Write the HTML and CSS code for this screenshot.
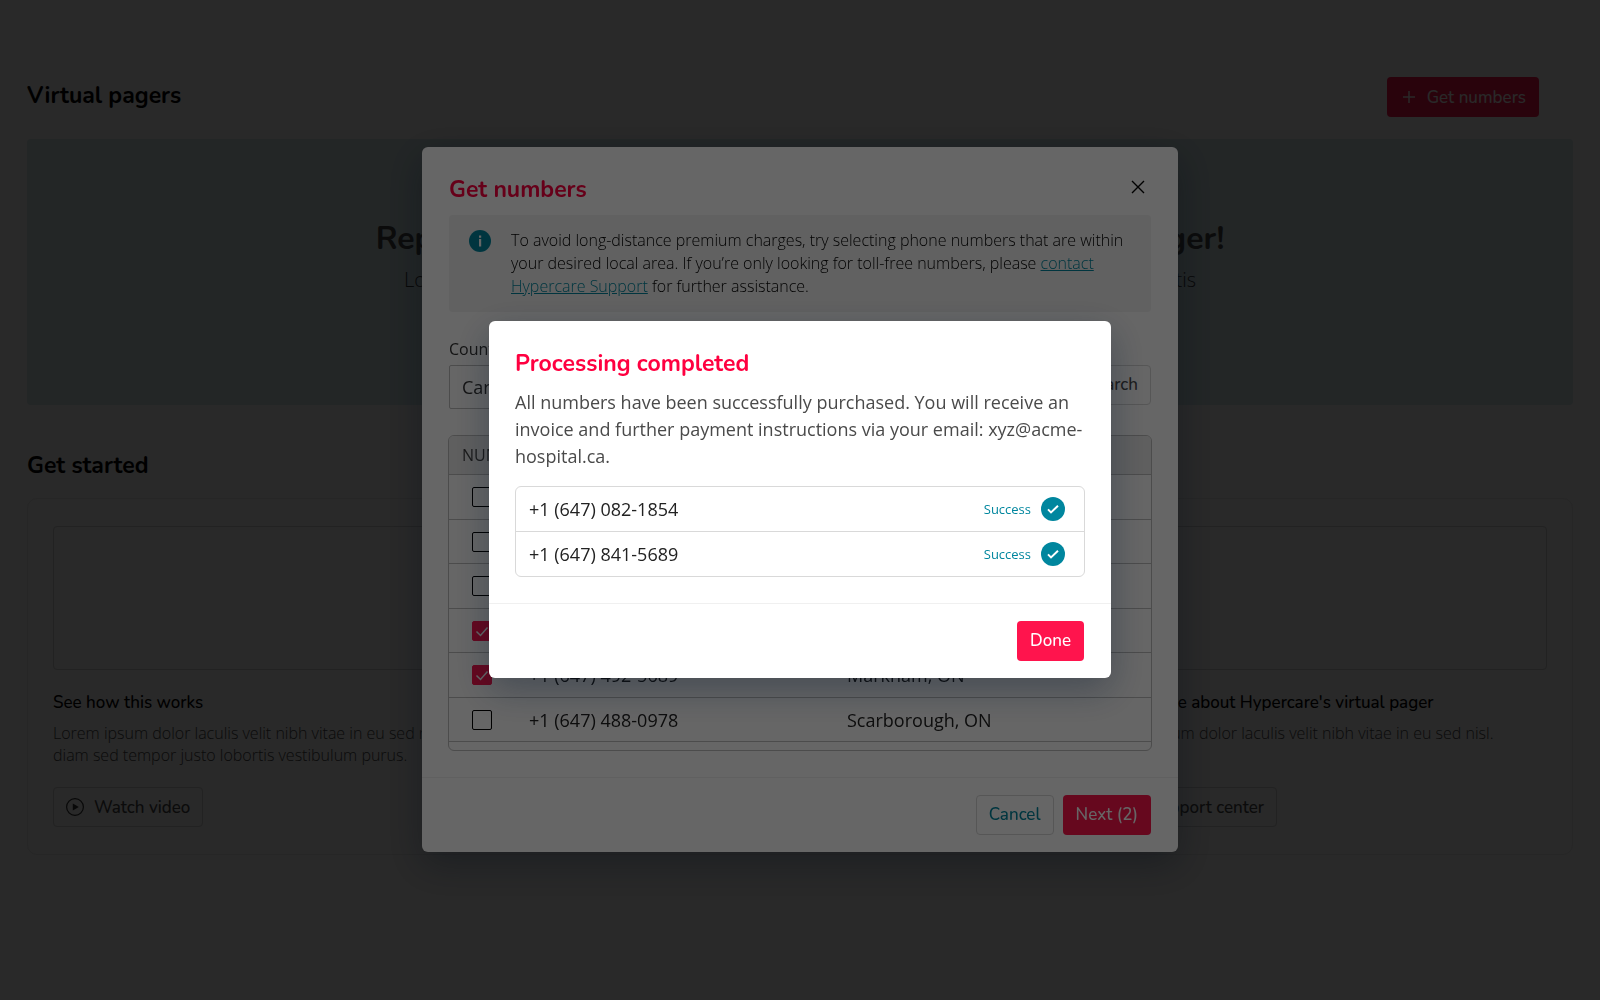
FILE: index.html
```html
<!DOCTYPE html>
<html lang="en">
<head>
    <meta charset="UTF-8">
    <meta name="viewport" content="width=device-width, initial-scale=1.0">
    <title>Virtual pagers</title>
    <link rel="stylesheet" href="styles.css">
</head>
<body>
    <main class="page">
        <header class="page-header">
            <h1>Virtual pagers</h1>
            <button type="button" class="btn btn-primary">
                <svg class="icon-plus" viewBox="0 0 12 12" aria-hidden="true"><path d="M6 0v12M0 6h12"/></svg>
                Get numbers
            </button>
        </header>

        <section class="banner">
            <h2>Replace all hospital pagers with Hypercare virtual pager!</h2>
            <p>Lorem ipsum dolor laculis velit nibh vitae in eu sed nisl. Diam sed tempor justo a lobortis</p>
        </section>

        <h2 class="section-title">Get started</h2>
        <section class="cards">
            <article class="card">
                <div class="card-picture"></div>
                <h3>See how this works</h3>
                <p>Lorem ipsum dolor laculis velit nibh vitae in eu sed nisl diam sed tempor justo lobortis vestibulum purus.</p>
                <button type="button" class="btn btn-outline">
                    <svg class="icon-play" viewBox="0 0 18 18" aria-hidden="true"><circle cx="9" cy="9" r="8.4"/><path d="M6.8 5.6l6 3.4-6 3.4z"/></svg>
                    Watch video
                </button>
            </article>
            <article class="card">
                <div class="card-picture"></div>
            </article>
            <article class="card">
                <div class="card-picture"></div>
                <h3>Learn more about Hypercare's virtual pager</h3>
                <p>Lorem ipsum dolor laculis velit nibh vitae in eu sed nisl.</p>
                <button type="button" class="btn btn-outline">Visit support center</button>
            </article>
        </section>
    </main>

    <div class="overlay">
        <section class="modal modal-numbers" role="dialog" aria-labelledby="numbers-title">
            <div class="modal-body">
                <div class="modal-header">
                    <h2 id="numbers-title">Get numbers</h2>
                    <button type="button" class="close" aria-label="Close">
                        <svg viewBox="0 0 14 14" aria-hidden="true"><path d="M1 1l12 12M13 1L1 13"/></svg>
                    </button>
                </div>

                <div class="notice">
                    <svg class="icon-info" viewBox="0 0 22 22" aria-hidden="true">
                        <circle cx="11" cy="11" r="11"/>
                        <path d="M10 5.6h2.2v2.2H10zM10 9h2.2v7.4H10z"/>
                    </svg>
                    <p>To avoid long-distance premium charges, try selecting phone numbers that are within your desired local area. If you’re only looking for toll-free numbers, please <a href="#">contact Hypercare Support</a> for further assistance.</p>
                </div>

                <form class="search">
                    <div class="field">
                        <label for="country">Country</label>
                        <select id="country">
                            <option>Canada</option>
                        </select>
                    </div>
                    <button type="button" class="btn btn-outline">Search</button>
                </form>

                <div class="numbers">
                    <table>
                        <colgroup>
                            <col class="col-check">
                            <col class="col-number">
                            <col>
                        </colgroup>
                        <thead>
                            <tr><th colspan="3">NUMBER</th></tr>
                        </thead>
                        <tbody>
                            <tr><td><input type="checkbox" aria-label="Select number"></td><td></td><td></td></tr>
                            <tr><td><input type="checkbox" aria-label="Select number"></td><td></td><td></td></tr>
                            <tr><td><input type="checkbox" aria-label="Select number"></td><td></td><td></td></tr>
                            <tr><td><input type="checkbox" aria-label="Select number" checked></td><td></td><td></td></tr>
                            <tr><td><input type="checkbox" aria-label="Select +1 (647) 492-5689" checked></td><td>+1 (647) 492-5689</td><td>Markham, ON</td></tr>
                            <tr><td><input type="checkbox" aria-label="Select +1 (647) 488-0978"></td><td>+1 (647) 488-0978</td><td>Scarborough, ON</td></tr>
                        </tbody>
                    </table>
                </div>
            </div>
            <footer class="modal-footer">
                <button type="button" class="btn btn-outline btn-cancel">Cancel</button>
                <button type="button" class="btn btn-primary">Next (2)</button>
            </footer>
        </section>
    </div>

    <div class="overlay">
        <section class="modal modal-done" role="dialog" aria-labelledby="done-title">
            <div class="modal-body">
                <h2 id="done-title">Processing completed</h2>
                <p>All numbers have been successfully purchased. You will receive an invoice and further payment instructions via your email: xyz@acme-hospital.ca.</p>
                <ul class="results">
                    <li>
                        <span class="number">+1 (647) 082-1854</span>
                        <span class="status">Success</span>
                        <svg class="icon-check" viewBox="0 0 24 24" aria-hidden="true"><circle cx="12" cy="12" r="12"/><path d="M7 12.4l3 3 7-6.6"/></svg>
                    </li>
                    <li>
                        <span class="number">+1 (647) 841-5689</span>
                        <span class="status">Success</span>
                        <svg class="icon-check" viewBox="0 0 24 24" aria-hidden="true"><circle cx="12" cy="12" r="12"/><path d="M7 12.4l3 3 7-6.6"/></svg>
                    </li>
                </ul>
            </div>
            <footer class="modal-footer">
                <button type="button" class="btn btn-primary">Done</button>
            </footer>
        </section>
    </div>
</body>
</html>
```
FILE: styles.css
```css
* {
    box-sizing: border-box;
}

body {
    margin: 0;
    background-color: #fff;
    color: #000;
    font-family: "Open Sans", "Noto Sans", sans-serif;
    font-size: 18px;
    overflow: hidden;
}

h1, h2, h3, p, ul {
    margin: 0;
    padding: 0;
}

h1, h2, h3, .btn {
    font-family: Nunito, Lato, sans-serif;
}

/* Buttons */
.btn {
    display: inline-flex;
    align-items: center;
    height: 40px;
    padding: 0 12px;
    border: 1px solid transparent;
    border-radius: 4px;
    font-size: 17px;
    font-weight: 500;
    white-space: nowrap;
}

.btn-primary {
    background-color: #ff144d;
    color: #fff;
}

.btn-outline {
    background-color: #fff;
    border-color: #d6d6d6;
    color: #4a4a4a;
}

.btn-cancel {
    color: #00869e;
}

.icon-plus {
    width: 12px;
    height: 12px;
    margin: 0 12px 0 3px;
    fill: none;
    stroke: #fff;
    stroke-width: 1.5;
}

.icon-play {
    width: 18px;
    height: 18px;
    margin-right: 10px;
    fill: none;
    stroke: #333;
    stroke-width: 1.2;
}

.icon-play path {
    fill: #333;
    stroke: none;
}

/* Page behind the dialogs */
.page {
    padding: 77px 27px 0;
}

.page-header {
    display: flex;
    align-items: center;
    justify-content: space-between;
    height: 40px;
    padding-right: 34px;
    margin-bottom: 22px;
}

.page h1, .section-title {
    font-size: 23px;
    line-height: 32px;
    font-weight: 700;
}

.page h1 {
    padding-bottom: 2px;
}

.banner {
    display: flex;
    flex-direction: column;
    align-items: center;
    height: 266px;
    padding-top: 78px;
    border-radius: 4px;
    background-color: #d9edf0;
}

.banner h2 {
    font-size: 32px;
    line-height: 44px;
    color: #4a4a4a;
}

.banner p {
    margin-top: 5px;
    font-size: 20px;
    line-height: 28px;
    font-weight: 300;
    color: #333;
}

.section-title {
    margin-top: 45px;
}

.cards {
    display: grid;
    grid-template-columns: repeat(3, 1fr);
    gap: 76px;
    margin-top: 16px;
    padding: 27px 25px;
    border: 1px solid #ededed;
    border-radius: 10px;
}

.card {
    display: flex;
    flex-direction: column;
    align-items: flex-start;
}

.card-picture {
    width: 100%;
    height: 144px;
    border: 1px solid #d6d6d6;
    border-radius: 4px;
}

.card h3 {
    margin-top: 21px;
    font-size: 17px;
    line-height: 24px;
    font-weight: 500;
}

.card p {
    max-width: 420px;
    height: 44px;
    margin: 7px 0 21px;
    font-size: 16px;
    line-height: 22px;
    font-weight: 300;
    color: #4a4a4a;
}

/* Dialogs */
.overlay {
    position: fixed;
    inset: 0;
    display: flex;
    align-items: center;
    justify-content: center;
    padding-bottom: 2px;
    background-color: rgba(0, 0, 0, 0.6);
}

.modal {
    border-radius: 6px;
    background-color: #fff;
    box-shadow: 0 12px 36px rgba(10, 25, 50, 0.35);
}

.modal h2 {
    font-size: 23px;
    line-height: 34px;
    font-weight: 700;
    color: #ff0040;
}

.modal-body {
    padding: 26px;
}

.modal-footer {
    display: flex;
    justify-content: flex-end;
    gap: 9px;
    padding: 17px 27px;
    border-top: 1px solid #f0f0f0;
}

.modal-numbers {
    width: 756px;
}

.modal-numbers .modal-body {
    padding: 26px 27px;
}

.modal-header {
    display: flex;
    justify-content: space-between;
    align-items: flex-start;
    margin-bottom: 8px;
}

.close {
    display: flex;
    padding: 7px 6px;
    border: none;
    background: none;
}

.close svg {
    width: 14px;
    height: 14px;
    stroke: #000;
    stroke-width: 1.4;
}

.notice {
    display: flex;
    gap: 20px;
    padding: 14px 18px 14px 20px;
    border-radius: 4px;
    background-color: #f2f2f2;
    font-size: 16px;
    line-height: 23px;
    font-weight: 300;
}

.notice a {
    color: #00869e;
}

.icon-info {
    flex-shrink: 0;
    width: 22px;
    height: 22px;
    margin-top: 1px;
    fill: #00869e;
}

.icon-info path {
    fill: #fff;
}

.search {
    display: flex;
    justify-content: space-between;
    align-items: flex-end;
    margin: 25px 0 26px;
}

.field {
    display: flex;
    flex-direction: column;
}

.field label {
    margin-bottom: 4px;
    font-size: 16px;
    line-height: 24px;
    color: #333;
}

.field select {
    width: 240px;
    height: 44px;
    padding-left: 12px;
    border: 1px solid #bdbdbd;
    border-radius: 2px;
    background-color: #fff;
    appearance: none;
    font: inherit;
    color: #333;
}

.search .btn {
    margin-bottom: 4px;
}

.numbers {
    height: 316px;
    margin: 0 -1px;
    overflow: hidden;
    border: 1px solid #bdbdbd;
    border-radius: 6px;
}

.numbers table {
    width: 100%;
    border-collapse: collapse;
    table-layout: fixed;
}

.col-check {
    width: 80px;
}

.col-number {
    width: 318px;
}

.numbers th {
    height: 39px;
    padding: 0 13px;
    border-bottom: 1px solid #bdbdbd;
    background-color: #ededed;
    font-size: 16px;
    font-weight: 400;
    text-align: left;
    color: #444;
}

.numbers td {
    height: 44px;
    padding: 0;
    border-bottom: 1px solid #bdbdbd;
    color: #222;
}

.numbers tr:nth-child(odd) td {
    height: 45px;
}

.numbers td:first-child {
    padding-left: 23px;
}

.numbers input {
    display: block;
    appearance: none;
    width: 20px;
    height: 20px;
    margin: 0;
    border: 1px solid #000;
    border-radius: 2px;
}

.numbers input:checked {
    border-color: #ff144d;
    background: #ff144d url("data:image/svg+xml,%3Csvg xmlns='http://www.w3.org/2000/svg' viewBox='0 0 18 18'%3E%3Cpath d='M3.5 9.5l4 4 7-8' fill='none' stroke='white' stroke-width='1.5'/%3E%3C/svg%3E") center / 18px no-repeat;
}

.modal-done {
    width: 622px;
}

.modal-done p {
    margin-top: 8px;
    line-height: 27px;
    color: #4a4a4a;
}

.results {
    margin-top: 16px;
    border: 1px solid #d9d9d9;
    border-radius: 6px;
    list-style: none;
}

.results li {
    display: flex;
    align-items: center;
    height: 44px;
    padding: 0 19px 0 13px;
}

.results li + li {
    height: 45px;
    border-top: 1px solid #d9d9d9;
}

.number {
    flex: 1;
    color: #222;
}

.status {
    margin-right: 10px;
    font-size: 13px;
    color: #00869e;
}

.icon-check {
    width: 24px;
    height: 24px;
    fill: #00869e;
}

.icon-check path {
    fill: none;
    stroke: #fff;
    stroke-width: 2;
}
```
